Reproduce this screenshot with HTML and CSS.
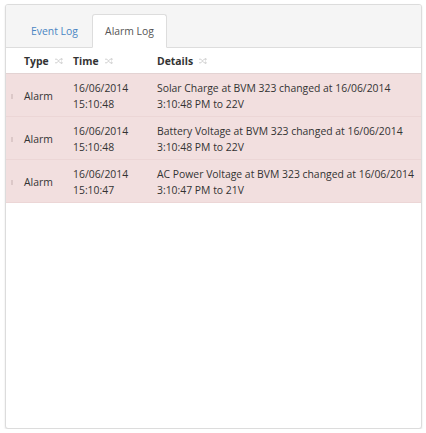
FILE: index.html
```html
<!DOCTYPE html>
<html>
<head>
<meta charset="utf-8">
<link rel="stylesheet" href="styles.css">
</head>
<body>
<div class="panel">
  <div class="tabs">
    <div class="tab">Event Log</div>
    <div class="tab active">Alarm Log</div>
  </div>
  <div class="table">
    <div class="row head">
      <div class="cell mark"></div>
      <div class="cell">Type<svg class="sort" viewBox="0 0 8 6" width="8" height="6"><path d="M0 1.2h2l3 3.6h2M0 4.8h2l3-3.6h2M6 0l1.5 1.2L6 2.4M6 3.6l1.5 1.2L6 6" fill="none" stroke="#cfcfcf" stroke-width="0.9"/></svg></div>
      <div class="cell">Time<svg class="sort" viewBox="0 0 8 6" width="8" height="6"><path d="M0 1.2h2l3 3.6h2M0 4.8h2l3-3.6h2M6 0l1.5 1.2L6 2.4M6 3.6l1.5 1.2L6 6" fill="none" stroke="#cfcfcf" stroke-width="0.9"/></svg></div>
      <div class="cell">Details<svg class="sort" viewBox="0 0 8 6" width="8" height="6"><path d="M0 1.2h2l3 3.6h2M0 4.8h2l3-3.6h2M6 0l1.5 1.2L6 2.4M6 3.6l1.5 1.2L6 6" fill="none" stroke="#cfcfcf" stroke-width="0.9"/></svg></div>
    </div>
    <div class="row alarm">
      <div class="cell mark"><span class="dot"></span></div>
      <div class="cell type">Alarm</div>
      <div class="cell">16/06/2014<br>15:10:48</div>
      <div class="cell">Solar Charge at BVM 323 changed at 16/06/2014<br>3:10:48 PM to 22V</div>
    </div>
    <div class="row alarm">
      <div class="cell mark"><span class="dot"></span></div>
      <div class="cell type">Alarm</div>
      <div class="cell">16/06/2014<br>15:10:48</div>
      <div class="cell">Battery Voltage at BVM 323 changed at 16/06/2014<br>3:10:48 PM to 22V</div>
    </div>
    <div class="row alarm">
      <div class="cell mark"><span class="dot"></span></div>
      <div class="cell type">Alarm</div>
      <div class="cell">16/06/2014<br>15:10:47</div>
      <div class="cell">AC Power Voltage at BVM 323 changed at 16/06/2014<br>3:10:47 PM to 21V</div>
    </div>
  </div>
</div>
</body>
</html>
```
FILE: styles.css
```css
html, body {
  margin: 0;
  padding: 0;
  background: #ffffff;
}
body {
  font-family: "Open Sans", "Noto Sans", sans-serif;
  font-size: 10.4px;
  color: #333333;
}
.panel {
  box-sizing: border-box;
  margin: 4px 0 0 5px;
  width: 417px;
  height: 425px;
  border: 1px solid #dcdcdc;
  border-radius: 3px;
  background: #ffffff;
  box-shadow: 0 1px 2px rgba(0,0,0,0.12);
  overflow: hidden;
}
.tabs {
  display: flex;
  align-items: flex-end;
  height: 43px;
  padding-left: 11px;
  background: #f5f5f5;
  border-bottom: 1px solid #dddddd;
  box-sizing: border-box;
}
.tab {
  box-sizing: border-box;
  height: 34px;
  width: 75px;
  margin-bottom: -1px;
  line-height: 33px;
  text-align: center;
  color: #4a86c3;
  border: 1px solid transparent;
  border-radius: 3px 3px 0 0;
}
.tab.active {
  background: #ffffff;
  color: #555555;
  border-color: #dddddd;
  border-bottom-color: #ffffff;
}
.row {
  display: grid;
  grid-template-columns: 18px 49px 84px 1fr;
}
.cell {
  line-height: 16px;
}
.head {
  height: 26px;
  align-items: center;
  font-weight: bold;
  color: #333;
  border-bottom: 1px solid #e3d3d3;
  box-sizing: border-box;
}
.head .cell {
  display: flex;
  align-items: center;
}
.sort {
  margin-left: 6px;
}
.alarm {
  background: #f2dfdf;
  padding: 6px 0 4px;
  border-bottom: 1px solid #ecd6d6;
}
.alarm .cell {
  white-space: nowrap;
}
.type {
  align-self: center;
}
.mark {
  align-self: center;
  display: flex;
  justify-content: flex-start;
  padding-left: 5px;
}
.dot {
  display: block;
  width: 2px;
  height: 5px;
  background: #dcc8c8;
}
```
